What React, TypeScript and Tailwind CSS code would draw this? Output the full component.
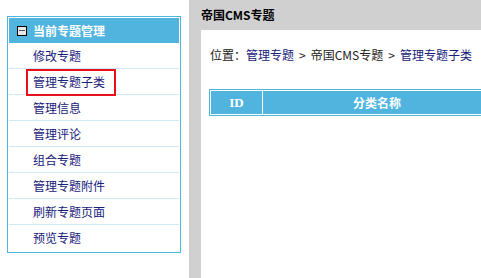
const menu = ['修改专题', '管理专题子类', '管理信息', '管理评论', '组合专题', '管理专题附件', '刷新专题页面', '预览专题'];

export default function App() {
  return (
    <div
      className="flex w-[481px] h-[278px] bg-white overflow-hidden text-[12px]"
      style={{ fontFamily: '"Noto Sans CJK SC", "Liberation Sans", sans-serif' }}
    >
      <div className="w-[189px] shrink-0 pl-[7px] pt-[16px]">
        <div className="w-[174px] border border-[#4fb4de] p-px">
          <div className="h-[25px] bg-[#50b4de] flex items-center pl-[8px] gap-[6px]">
            <span className="w-[10px] h-[10px] border border-black bg-[#e8e8e8] flex items-center justify-center">
              <span className="w-[6px] h-px bg-[#555]" />
            </span>
            <span className="text-white font-bold leading-none">当前专题管理</span>
          </div>
          {menu.map((m, i) => (
            <div
              key={m}
              className={`relative h-[26px] flex items-center pl-[24px] text-[#18207a] ${i < menu.length - 1 ? 'border-b border-[#cfe9f7]' : ''}`}
            >
              {m}
              {i === 1 && (
                <span className="absolute left-[17px] top-0 w-[90px] h-[27px] border-2 border-[#e8101a]" />
              )}
            </div>
          ))}
        </div>
      </div>

      <div className="flex-1 flex flex-col bg-[#d0d0d0] pl-[12px]">
        <div className="h-[30px] flex items-center font-bold text-black">帝国CMS专题</div>
        <div className="flex-1 bg-white pl-[8px]">
          <div className="h-[49px] flex items-center pl-[1px] pt-[1px] text-[#222] whitespace-nowrap">
            位置：<span className="text-[#18207a]">管理专题</span>
            <span className="mx-[5px]">&gt;</span>帝国CMS专题
            <span className="mx-[5px]">&gt;</span>
            <span className="text-[#18207a]">管理专题子类</span>
          </div>
          <div className="mt-[10px] w-[300px] border border-[#4fb4de] p-px bg-white">
            <div className="flex h-[23px] gap-px bg-white text-white font-bold">
              <div
                className="w-[51px] bg-[#50b4de] flex items-center justify-center text-[13px]"
                style={{ fontFamily: '"Liberation Serif", serif' }}
              >
                ID
              </div>
              <div className="flex-1 bg-[#50b4de] flex items-center pl-[90px]">分类名称</div>
            </div>
          </div>
        </div>
      </div>
    </div>
  );
}
